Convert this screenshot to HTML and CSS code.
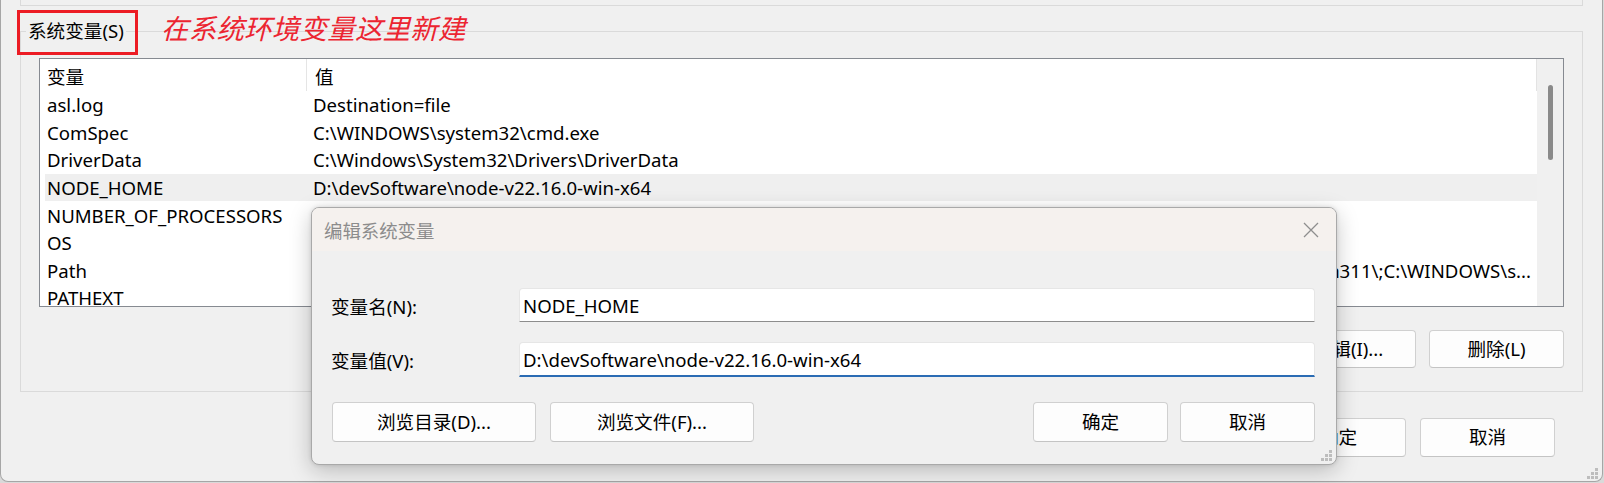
FILE: index.html
```html
<!DOCTYPE html>
<html lang="zh-CN">
<head>
<meta charset="utf-8">
<title>环境变量</title>
<link rel="stylesheet" href="styles.css">
</head>
<body>
<div class="window">
  <div class="user-group"></div>
  <div class="group">
    <span class="group-title">系统变量(S)</span>
    <div class="listbox">
      <div class="list-main">
        <div class="list-head">
          <div class="hcell c1">变量</div>
          <div class="hcell c2">值</div>
        </div>
        <div class="row"><div class="cell c1">asl.log</div><div class="cell c2">Destination=file</div></div>
        <div class="row"><div class="cell c1">ComSpec</div><div class="cell c2">C:\WINDOWS\system32\cmd.exe</div></div>
        <div class="row"><div class="cell c1">DriverData</div><div class="cell c2">C:\Windows\System32\Drivers\DriverData</div></div>
        <div class="row selected"><div class="cell c1">NODE_HOME</div><div class="cell c2">D:\devSoftware\node-v22.16.0-win-x64</div></div>
        <div class="row"><div class="cell c1">NUMBER_OF_PROCESSORS</div><div class="cell c2">16</div></div>
        <div class="row"><div class="cell c1">OS</div><div class="cell c2">Windows_NT</div></div>
        <div class="row"><div class="cell c1">Path</div><div class="cell c2 tail"><span>C:\Program Files\Common Files\Oracle\Java\javapath;C:\Users\dev\AppData\Local\Programs\Python\Python311\Scripts\;C:\Users\dev\AppData\Local\Programs\Python\Python311\;C:\WINDOWS\s...</span></div></div>
        <div class="row"><div class="cell c1">PATHEXT</div><div class="cell c2">.COM;.EXE;.BAT;.CMD;.VBS;.VBE;.JS;.JSE;.WSF;.WSH;.MSC</div></div>
      </div>
      <div class="scrollbar"><div class="thumb"></div></div>
    </div>
    <div class="btn-row">
      <button class="btn">新建(W)...</button>
      <button class="btn">编辑(I)...</button>
      <button class="btn">删除(L)</button>
    </div>
  </div>
  <div class="footer">
    <button class="btn">确定</button>
    <button class="btn">取消</button>
  </div>
  <svg class="grip" width="12" height="12" viewBox="0 0 12 12"><rect x="8" y="0" width="3" height="3"/><rect x="4" y="4" width="3" height="3"/><rect x="8" y="4" width="3" height="3"/><rect x="0" y="8" width="3" height="3"/><rect x="4" y="8" width="3" height="3"/><rect x="8" y="8" width="3" height="3"/></svg>
</div>

<div class="annot-box"></div>
<div class="annot-text">在系统环境变量这里新建</div>

<div class="dialog">
  <div class="dlg-title">
    <span class="dlg-caption">编辑系统变量</span>
    <svg class="close" width="16" height="16" viewBox="0 0 16 16"><path d="M1 1L15 15M15 1L1 15" stroke="#8e8e8e" stroke-width="1.3" fill="none"/></svg>
  </div>
  <div class="dlg-body">
    <div class="field">
      <label class="lbl">变量名(N):</label>
      <div class="input">NODE_HOME</div>
    </div>
    <div class="field">
      <label class="lbl">变量值(V):</label>
      <div class="input focused">D:\devSoftware\node-v22.16.0-win-x64</div>
    </div>
    <div class="dlg-buttons">
      <button class="btn wide">浏览目录(D)...</button>
      <button class="btn wide">浏览文件(F)...</button>
      <span class="spacer"></span>
      <button class="btn">确定</button>
      <button class="btn">取消</button>
    </div>
  </div>
  <svg class="grip dgrip" width="12" height="12" viewBox="0 0 12 12"><rect x="8" y="0" width="3" height="3"/><rect x="4" y="4" width="3" height="3"/><rect x="8" y="4" width="3" height="3"/><rect x="0" y="8" width="3" height="3"/><rect x="4" y="8" width="3" height="3"/><rect x="8" y="8" width="3" height="3"/></svg>
</div>
</body>
</html>
```
FILE: styles.css
```css
* { box-sizing: border-box; }
html, body { margin: 0; padding: 0; }
body {
  width: 1604px;
  height: 483px;
  overflow: hidden;
  background: #d9d9d9;
  font-family: "Noto Sans", "Noto Sans CJK SC", sans-serif;
  font-size: 18.6px;
  color: #000;
  position: relative;
}
.window {
  position: relative;
  width: 1603px;
  height: 482px;
  background: #f0f0f0;
  border: 1px solid #a6a6a6;
  border-top: none;
  border-radius: 0 0 8px 8px;
  display: flex;
  flex-direction: column;
}
.user-group {
  height: 6px;
  margin: 0 19px;
  border: 1px solid #dadada;
  border-top: none;
  flex: none;
}
.group {
  margin: 25px 19px 0 19px;
  border: 1px solid #dadada;
  padding: 0 18px 23px 18px;
  flex: none;
}
.group-title {
  display: block;
  width: fit-content;
  margin: -13px 0 0 -13px;
  padding: 0 2px;
  background: #f0f0f0;
  line-height: 24px;
}
.listbox {
  margin-top: 15px;
  height: 249px;
  border: 1px solid #868a91;
  background: #fff;
  display: flex;
  overflow: hidden;
}
.list-main {
  flex: 1;
  min-width: 0;
  overflow: hidden;
}
.list-head {
  display: flex;
  height: 32px;
  align-items: stretch;
  border-right: 1px solid #e3e3e3;
}
.hcell {
  display: flex;
  align-items: center;
  white-space: nowrap;
}
.hcell.c1 {
  width: 267px;
  padding-left: 7px;
  border-right: 1px solid #e5e5e5;
}
.hcell.c2 { padding-left: 8px; }
.row {
  display: flex;
  height: 27.6px;
  margin-left: 5px;
  align-items: center;
  white-space: nowrap;
}
.row.selected { background: #efefef; }
.cell.c1 {
  width: 268px;
  padding-left: 2px;
  flex: none;
}
.cell.c2 {
  flex: 1;
  min-width: 0;
  overflow: hidden;
}
.cell.tail {
  display: flex;
  justify-content: flex-end;
  padding-right: 6px;
}
.cell.tail span { flex: none; }
.scrollbar {
  width: 26px;
  flex: none;
  background: #f0f0f0;
  padding: 26px 0 0 11px;
}
.thumb {
  width: 5px;
  height: 75px;
  border-radius: 3px;
  background: #8a8a8a;
}
.btn-row {
  margin-top: 23px;
  display: flex;
  justify-content: flex-end;
  gap: 13px;
}
.btn {
  font: inherit;
  color: #000;
  background: #fdfdfd;
  border: 1px solid #d0d0d0;
  border-bottom-color: #c4c4c4;
  border-radius: 4px;
  width: 135px;
  height: 38px;
  padding: 0;
  line-height: 1;
}
.footer {
  margin-top: 26px;
  padding-right: 47px;
  display: flex;
  justify-content: flex-end;
  gap: 14px;
}
.footer .btn { height: 39px; }
.grip {
  position: absolute;
  right: 3px;
  bottom: 1px;
  fill: #bdbdbd;
}

.annot-box {
  position: absolute;
  left: 17px;
  top: 10px;
  width: 121px;
  height: 45px;
  border: 3px solid #ec1c24;
}
.annot-text {
  position: absolute;
  left: 161px;
  top: 8px;
  font-family: "Noto Sans CJK SC", sans-serif;
  font-style: italic;
  font-size: 27.5px;
  line-height: 38px;
  color: #ec2531;
  letter-spacing: 0.2px;
}

.dialog {
  position: absolute;
  left: 311px;
  top: 207px;
  width: 1026px;
  height: 258px;
  background: #f0f0f0;
  border: 1px solid #a9a9a9;
  border-radius: 8px;
  overflow: hidden;
  box-shadow: 0 6px 22px rgba(0,0,0,0.22), 0 0 4px rgba(0,0,0,0.12);
}
.dlg-title {
  height: 43px;
  background: #f5f1ee;
  display: flex;
  align-items: center;
  justify-content: space-between;
  padding: 0 17px 0 12px;
}
.dlg-caption {
  color: #8c8c8c;
  font-family: "Noto Sans CJK SC", sans-serif;
  font-size: 18.4px;
}
.close { display: block; }
.dlg-body {
  padding: 37px 21px 0 19px;
}
.field {
  display: flex;
  align-items: center;
  margin-bottom: 20px;
}
.field + .field { margin-bottom: 25px; }
.lbl {
  width: 188px;
  flex: none;
}
.input {
  flex: 1;
  height: 34px;
  background: #fff;
  border: 1px solid #e6e6e6;
  border-bottom: 1px solid #8d8d8d;
  border-radius: 4px 4px 0 0;
  padding: 0 3px;
  display: flex;
  align-items: center;
  white-space: nowrap;
}
.input.focused {
  height: 35px;
  border-bottom: 2px solid #2b6cb4;
}
.dlg-buttons {
  display: flex;
  gap: 12px;
  padding-left: 1px;
}
.dlg-buttons .btn { height: 40px; }
.dlg-buttons .btn.wide { width: 204px; }
.dlg-buttons .btn.wide + .btn.wide { margin-left: 2px; }
.spacer { flex: 1; }
.dgrip { right: 3px; bottom: 2px; }
```
